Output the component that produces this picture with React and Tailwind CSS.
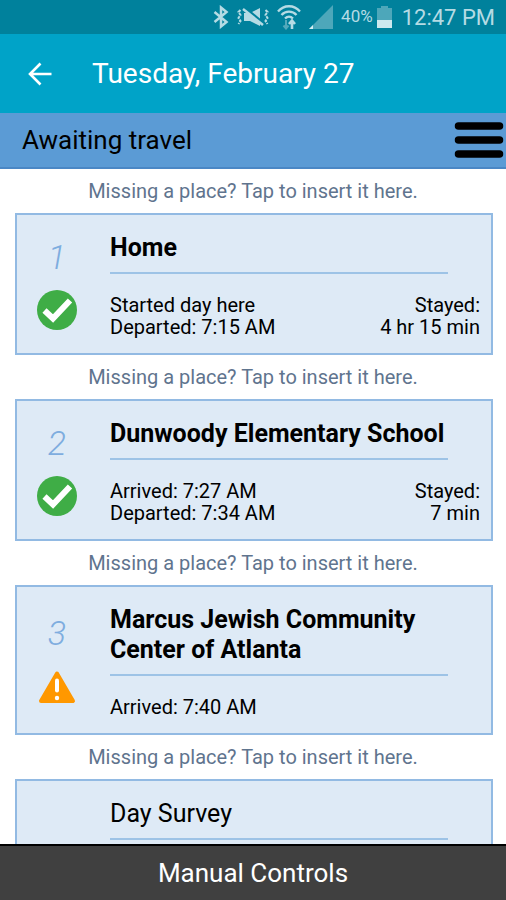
import React from 'react';

const places = [
  {
    id: 1,
    name: 'Home',
    status: 'done',
    details: ['Started day here', 'Departed: 7:15 AM'],
    stayed: '4 hr 15 min',
  },
  {
    id: 2,
    name: 'Dunwoody Elementary School',
    status: 'done',
    details: ['Arrived: 7:27 AM', 'Departed: 7:34 AM'],
    stayed: '7 min',
  },
  {
    id: 3,
    name: 'Marcus Jewish Community Center of Atlanta',
    status: 'warning',
    details: ['Arrived: 7:40 AM'],
  },
];

const BluetoothIcon = () => (
  <svg width="16" height="24" viewBox="0 0 16 24" fill="none" stroke="#b5dbe4" strokeWidth="2.500">
    <path d="M1.500 7 13.500 17 8 21.500V2.500l5.500 4.500L1.500 17" />
  </svg>
);

const VibrateIcon = () => (
  <svg width="32" height="20" viewBox="0 0 32 20" fill="none" stroke="#b5dbe4">
    <path d="M7 6h6l10-5v18l-10-5H7z" fill="#b5dbe4" stroke="none" />
    <path d="M8 1l19 16" stroke="#00819c" strokeWidth="3" />
    <path d="M6 2l20 16" strokeWidth="2.500" />
    <path d="M3.500 3 1.500 5l2 3-2 3 2 3-2 3M28.500 3l2 2-2 3 2 3-2 3 2 3" strokeWidth="2" strokeDasharray="3 1" />
  </svg>
);

const WifiIcon = () => (
  <svg width="24" height="26" viewBox="0 0 24 26" fill="none" stroke="#b5dbe4">
    <path d="M1 7.500C7 .5 17 .5 23 7.500M4.500 11c4-4.500 11-4.500 15 0M8 14.500c2.500-2.500 5.500-2.500 8 0" strokeWidth="2.300" />
    <path d="M9 16v8M6.500 21.500 9 24.500l2.500-3" stroke="#52a9bb" strokeWidth="2" />
    <path d="M15 25v-8M12 20l3-3.500 3 3.500" strokeWidth="2.600" />
  </svg>
);

const SignalIcon = () => (
  <svg width="24" height="24" viewBox="0 0 24 24">
    <path d="M24 0v24H0z" fill="#4da7ba" />
    <path d="M4 20v4H0z" fill="#d4edf2" />
  </svg>
);

const BatteryIcon = () => (
  <svg width="15" height="22" viewBox="0 0 15 22">
    <path d="M4 0h7v2h4v20H0V2h4z" fill="#4da7ba" />
    <path d="M0 14h15v8H0z" fill="#cde8ee" />
  </svg>
);

const BackIcon = () => (
  <svg width="24" height="24" viewBox="0 0 24 24" fill="none" stroke="#fff" strokeWidth="2.600">
    <path d="M23.500 12H2.500M12.500 1.500 2 12l10.500 10.500" />
  </svg>
);

const MenuIcon = () => (
  <svg width="50" height="38" viewBox="0 0 50 38" stroke="#000" strokeWidth="7.500" strokeLinecap="round">
    <path d="M4.500 5h41M4.500 19h41M4.500 33h41" />
  </svg>
);

const StatusIcon = ({ status }) => {
  if (status === 'warning') {
    return (
      <svg width="40" height="40" viewBox="0 0 40 40" role="img" aria-label="Needs attention">
        <path d="M20 7.500 36 35H4z" fill="#ff9800" stroke="#ff9800" strokeWidth="4" strokeLinejoin="round" />
        <path d="M20 14.500v10" stroke="#fff" strokeWidth="4" strokeLinecap="round" />
        <circle cx="20" cy="32" r="2.200" fill="#fff" />
      </svg>
    );
  }
  return (
    <svg width="40" height="40" viewBox="0 0 40 40" role="img" aria-label="Complete">
      <circle cx="20" cy="20" r="20" fill="#3fad46" />
      <path d="M7.500 20.500 16 28.500 33 10.500" fill="none" stroke="#fff" strokeWidth="6" />
    </svg>
  );
};

const InsertPlace = () => (
  <button className="h-11 w-full shrink-0 text-xl leading-6 text-[#5f748e]">
    Missing a place? Tap to insert it here.
  </button>
);

const Card = ({ left, title, children }) => (
  <section className="mr-[13px] ml-[15px] flex shrink-0 border-2 border-[#92bae3] bg-[#deeaf6]">
    <div className="flex w-20 shrink-0 flex-col items-center justify-center gap-[14px]">{left}</div>
    <div className="flex-1 pt-[18px] pr-[11px] pb-[15px] pl-[13px]">
      <div className="mr-8 mb-5 border-b-2 border-[#9dc3e6] pb-[9px]">{title}</div>
      {children}
    </div>
  </section>
);

const PlaceCard = ({ place }) => (
  <Card
    left={
      <>
        <span className="text-[34px] leading-[38px] font-light text-[#7eaddf] italic">{place.id}</span>
        <StatusIcon status={place.status} />
      </>
    }
    title={<h2 className="text-[25px] leading-[30px] font-bold">{place.name}</h2>}
  >
    <div className="flex justify-between text-xl leading-[22px]">
      <div>
        {place.details.map((line) => (
          <p key={line}>{line}</p>
        ))}
      </div>
      {place.stayed && (
        <div className="text-right">
          <p>Stayed:</p>
          <p>{place.stayed}</p>
        </div>
      )}
    </div>
  </Card>
);

const App = () => {
  return (
    <div className="flex h-screen flex-col overflow-hidden bg-white font-['Roboto',sans-serif] text-black">
      {/* Status bar */}
      <div className="flex h-[34px] shrink-0 items-center justify-end bg-[#00819c] pr-[11px] text-[#b5dbe4]">
        <div className="flex items-center gap-2">
          <BluetoothIcon />
          <VibrateIcon />
          <WifiIcon />
          <SignalIcon />
        </div>
        <span className="mr-1 ml-2 text-[17px]">40%</span>
        <BatteryIcon />
        <span className="ml-[10px] text-[22px]">12:47 PM</span>
      </div>

      <header className="flex h-[79px] shrink-0 items-center bg-[#00a3c8] pl-7 text-white">
        <button aria-label="Back">
          <BackIcon />
        </button>
        <h1 className="ml-10 text-[28px]">Tuesday, February 27</h1>
      </header>

      <div className="flex h-14 shrink-0 items-center justify-between border-b-2 border-[#4a87c5] bg-[#5b9bd5] pr-[2px] pl-[22px]">
        <span className="text-[26px]">Awaiting travel</span>
        <button aria-label="Menu">
          <MenuIcon />
        </button>
      </div>

      <main className="flex flex-1 flex-col overflow-y-auto [scrollbar-width:none]">
        {places.map((place) => (
          <React.Fragment key={place.id}>
            <InsertPlace />
            <PlaceCard place={place} />
          </React.Fragment>
        ))}
        <InsertPlace />
        <Card title={<h2 className="text-[25px] leading-[30px]">Day Survey</h2>} />
      </main>

      <button className="h-14 shrink-0 border-t-2 border-black bg-[#404040] text-[26px] text-white">
        Manual Controls
      </button>
    </div>
  );
};

export default App;
